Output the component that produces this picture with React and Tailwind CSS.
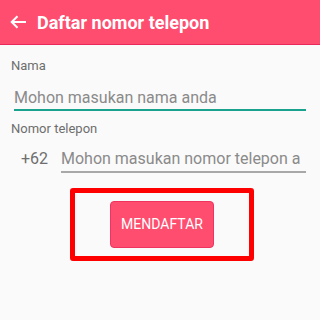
export default function App() {
  return (
    <div className="h-[320px] w-[320px] overflow-hidden bg-[#fafafa] font-['Roboto',sans-serif]">
      <header className="flex h-[45px] items-center border-b border-[#e8295a] bg-[#ff4d6f] pl-[10px]">
        <svg width="17" height="14" viewBox="0 0 17 14" fill="none" stroke="white" strokeWidth="2">
          <path d="M16 7H2M7.5 1.2L1.7 7l5.8 5.8" />
        </svg>
        <h1 className="ml-[10px] text-[18px] font-bold text-white">Daftar nomor telepon</h1>
      </header>

      <div className="px-[11px] pt-[13px]">
        <div className="text-[13px] leading-[16px] text-[#6e6e6e]">Nama</div>
        <div className="mx-[3px] mt-[12px] border-b-2 border-[#19a38f] text-[16px] leading-[23px] text-[#8a8a8a]">
          Mohon masukan nama anda
        </div>

        <div className="mt-[10px] text-[13px] leading-[16px] text-[#6e6e6e]">Nomor telepon</div>
        <div className="mt-[10px] flex items-start">
          <span className="w-[50px] pl-[10px] text-[16px] leading-[24px] text-[#6e6e6e]">+62</span>
          <div className="mr-[3px] flex-1 overflow-hidden whitespace-nowrap border-b-2 border-[#a8a8a8] text-[16px] leading-[24px] text-[#8a8a8a]">
            Mohon masukan nomor telepon a
          </div>
        </div>
      </div>

      <div className="mt-[15px] flex justify-center pl-[4px]">
        <div className="flex h-[73px] w-[184px] items-center justify-center rounded-[3px] border-[5px] border-[#ff0000]">
          <button className="h-[47px] w-[104px] rounded-[4px] border border-[#f0325e] bg-[#ff4d6f] text-[14px] text-white">
            MENDAFTAR
          </button>
        </div>
      </div>
    </div>
  );
}
